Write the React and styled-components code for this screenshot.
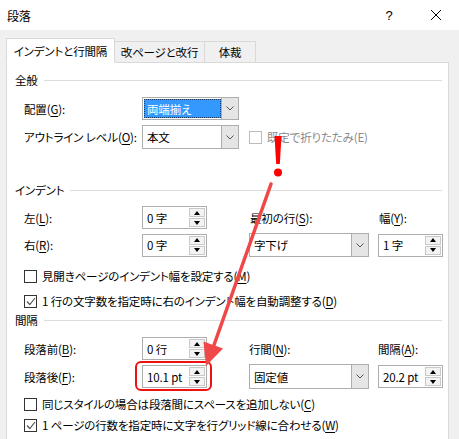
import React from 'react';
import styled, { createGlobalStyle } from 'styled-components';

const GlobalStyle = createGlobalStyle`
  html, body {
    margin: 0;
    padding: 0;
    background: #f0f0f0;
  }
  body {
    font-family: "Noto Sans CJK JP", "Noto Sans", sans-serif;
    font-size: 11.5px;
    letter-spacing: -0.15px;
    font-feature-settings: "palt";
    color: #000;
  }
  u {
    text-underline-offset: 2px;
  }
`;

const Dialog = styled.div`
  position: relative;
  width: 459px;
  height: 439px;
  overflow: hidden;
  background: #f0f0f0;
`;

const TitleBar = styled.div`
  height: 30px;
  background: #fff;
  display: flex;
  align-items: center;
  padding-left: 7px;

  .title {
    flex: 1;
    font-size: 12px;
  }

  .help {
    width: 20px;
    text-align: center;
    font-family: "Liberation Sans", sans-serif;
    font-size: 13px;
    margin-right: 30px;
  }

  .close {
    width: 14px;
    height: 14px;
    margin-right: 16px;
  }
`;

const TabBar = styled.div`
  display: flex;
  align-items: flex-end;
  padding: 8px 0 0 6px;
  height: 24px;
`;

const Tab = styled.div`
  box-sizing: border-box;
  height: ${(p) => (p.$active ? '25px' : '22px')};
  width: ${(p) => p.$w}px;
  display: flex;
  align-items: center;
  justify-content: center;
  white-space: nowrap;
  background: ${(p) => (p.$active ? '#fff' : '#f0f0f0')};
  border: 1px solid #d9d9d9;
  border-bottom: ${(p) => (p.$active ? '1px solid #fff' : '1px solid #d9d9d9')};
  border-left: ${(p) => (p.$first ? '1px solid #d9d9d9' : 'none')};
  margin-bottom: -1px;
  position: relative;
  z-index: ${(p) => (p.$active ? 2 : 1)};
`;

const Panel = styled.div`
  box-sizing: border-box;
  margin: 0 10px 0 6px;
  height: 420px;
  background: #fff;
  border: 1px solid #d9d9d9;
  padding: 9px 6px 0 8px;
`;

const GroupHeader = styled.div`
  display: flex;
  align-items: center;
  height: 16px;
  margin-top: ${(p) => p.$mt || 0}px;

  &::after {
    content: '';
    flex: 1;
    height: 1px;
    background: #dcdcdc;
    margin-left: 6px;
  }
`;

const Row = styled.div`
  display: flex;
  align-items: center;
  height: ${(p) => p.$h || 23}px;
  margin-top: ${(p) => p.$mt || 0}px;
  padding-left: 9px;
`;

const Label = styled.div`
  width: ${(p) => p.$w}px;
  flex-shrink: 0;
  white-space: nowrap;
`;

const Gap = styled.div`
  width: ${(p) => p.$w}px;
  flex-shrink: 0;
`;

const SelectBox = styled.div`
  box-sizing: border-box;
  width: ${(p) => p.$w}px;
  height: ${(p) => p.$h || 23}px;
  border: 1px solid #adadad;
  display: flex;
  align-items: stretch;
  background: #fff;
  flex-shrink: 0;

  .value {
    flex: 1;
    display: flex;
    align-items: center;
    padding-left: 3px;
    margin: 1px 0 1px 1px;
    background: ${(p) => (p.$selected ? '#3399ff' : 'transparent')};
    color: ${(p) => (p.$selected ? '#fff' : '#000')};
    outline: ${(p) => (p.$selected ? '1px dotted #1a3a66' : 'none')};
    outline-offset: -1px;
  }

  .drop {
    width: 16px;
    background: #e5e5e5;
    border-left: 1px solid #adadad;
    display: flex;
    align-items: center;
    justify-content: center;
  }
`;

const SpinBox = styled.div`
  box-sizing: border-box;
  width: 65px;
  height: 23px;
  border: 1px solid #adadad;
  display: flex;
  background: #fff;
  flex-shrink: 0;

  .value {
    flex: 1;
    display: flex;
    align-items: center;
    padding-left: 4px;
    white-space: nowrap;
  }

  .buttons {
    width: 16px;
    display: flex;
    flex-direction: column;
    padding: 1px 1px 1px 0;
    gap: 1px;
  }
`;

const SpinButton = styled.div`
  flex: 1;
  box-sizing: border-box;
  border: 1px solid #c9c9c9;
  background: #f3f3f3;
  display: flex;
  align-items: center;
  justify-content: center;

  &::before {
    content: '';
    border-left: 3.5px solid transparent;
    border-right: 3.5px solid transparent;
    ${(p) => (p.$up ? 'border-bottom: 4px solid #000;' : 'border-top: 4px solid #000;')}
  }
`;

const Highlight = styled.div`
  position: relative;

  &::after {
    content: '';
    position: absolute;
    top: -4px;
    left: -7px;
    right: -5px;
    bottom: -3px;
    border: 2px solid #f01010;
    border-radius: 6px;
    pointer-events: none;
  }
`;

const CheckRow = styled.label`
  display: flex;
  align-items: center;
  height: 20px;
  margin-top: ${(p) => p.$mt || 0}px;
  padding-left: ${(p) => (p.$inline ? 0 : 9)}px;
  color: ${(p) => (p.$disabled ? '#8a8a8a' : '#000')};
  white-space: nowrap;
`;

const Box = styled.span`
  box-sizing: border-box;
  width: 13px;
  height: 13px;
  border: 1px solid ${(p) => (p.$disabled ? '#bcbcbc' : '#333')};
  background: #fff;
  margin-right: 5px;
  display: flex;
  align-items: center;
  justify-content: center;
  flex-shrink: 0;
`;

const Overlay = styled.svg`
  position: absolute;
  left: 0;
  top: 0;
  pointer-events: none;
`;

const Chevron = () => (
  <svg width="8" height="5" viewBox="0 0 8 5">
    <path d="M0.5 0.5 L4 4 L7.5 0.5" fill="none" stroke="#555" strokeWidth="1" />
  </svg>
);

const Select = ({ value, w, h, selected }) => (
  <SelectBox $w={w} $h={h} $selected={selected}>
    <div className="value">{value}</div>
    <div className="drop"><Chevron /></div>
  </SelectBox>
);

const Spin = ({ value }) => (
  <SpinBox>
    <div className="value">{value}</div>
    <div className="buttons">
      <SpinButton $up />
      <SpinButton />
    </div>
  </SpinBox>
);

const Check = ({ checked, disabled, children, mt, inline }) => (
  <CheckRow $mt={mt} $disabled={disabled} $inline={inline}>
    <Box $disabled={disabled}>
      {checked && (
        <svg width="10" height="9" viewBox="0 0 10 9">
          <path d="M1 4.5 L3.8 7.5 L9 1" fill="none" stroke="#555" strokeWidth="1.2" />
        </svg>
      )}
    </Box>
    {children}
  </CheckRow>
);

const App = () => (
  <Dialog>
    <GlobalStyle />
    <TitleBar>
      <div className="title">段落</div>
      <div className="help">?</div>
      <svg className="close" viewBox="0 0 14 14">
        <path d="M2 2 L12 12 M12 2 L2 12" stroke="#000" strokeWidth="1" />
      </svg>
    </TitleBar>

    <TabBar>
      <Tab $active $first $w={109}>インデントと行間隔</Tab>
      <Tab $w={90}>改ページと改行</Tab>
      <Tab $w={51}>体裁</Tab>
    </TabBar>

    <Panel>
      <GroupHeader>全般</GroupHeader>
      <Row $mt={9}>
        <Label $w={118}>配置(<u>G</u>):</Label>
        <Select value="両端揃え" w={97} selected />
      </Row>
      <Row $mt={5} $h={24}>
        <Label $w={118}>アウトライン レベル(<u>O</u>):</Label>
        <Select value="本文" w={97} h={24} />
        <Gap $w={10} />
        <Check disabled inline>既定で折りたたみ(E)</Check>
      </Row>

      <GroupHeader $mt={33}>インデント</GroupHeader>
      <Row $mt={8}>
        <Label $w={118}>左(<u>L</u>):</Label>
        <Spin value="0 字" />
        <Gap $w={43} />
        <Label $w={129}>最初の行(<u>S</u>):</Label>
        <Label $w={60}>幅(<u>Y</u>):</Label>
      </Row>
      <Row $mt={4} $h={24}>
        <Label $w={118}>右(<u>R</u>):</Label>
        <Spin value="0 字" />
        <Gap $w={42} />
        <Select value="字下げ" w={120} h={24} />
        <Gap $w={9} />
        <Spin value="1 字" />
      </Row>
      <Check mt={9}>見開きページのインデント幅を設定する(<u>M</u>)</Check>
      <Check mt={5} checked>1 行の文字数を指定時に右のインデント幅を自動調整する(<u>D</u>)</Check>

      <GroupHeader $mt={1}>間隔</GroupHeader>
      <Row $mt={9}>
        <Label $w={118}>段落前(<u>B</u>):</Label>
        <Spin value="0 行" />
        <Gap $w={42} />
        <Label $w={129}>行間(<u>N</u>):</Label>
        <Label $w={60}>間隔(<u>A</u>):</Label>
      </Row>
      <Row $mt={4} $h={25}>
        <Label $w={118}>段落後(<u>F</u>):</Label>
        <Highlight>
          <Spin value="10.1 pt" />
        </Highlight>
        <Gap $w={42} />
        <Select value="固定値" w={120} h={25} />
        <Gap $w={9} />
        <Spin value="20.2 pt" />
      </Row>
      <Check mt={5}>同じスタイルの場合は段落間にスペースを追加しない(<u>C</u>)</Check>
      <Check mt={1} checked>1 ページの行数を指定時に文字を行グリッド線に合わせる(<u>W</u>)</Check>
    </Panel>

    <Overlay width="459" height="439" viewBox="0 0 459 439">
      <path d="M274.5 136 L281.5 136 L279.8 164 L276.2 164 Z" fill="#ff0000" />
      <circle cx="278" cy="172.5" r="4" fill="#ff0000" />
      <line x1="271" y1="184" x2="214" y2="345" stroke="#f04848" strokeWidth="3.5" strokeLinecap="round" />
      <path d="M206 366 L203.5 341.5 L223 348.5 Z" fill="#f04848" />
    </Overlay>
  </Dialog>
);

export default App;
